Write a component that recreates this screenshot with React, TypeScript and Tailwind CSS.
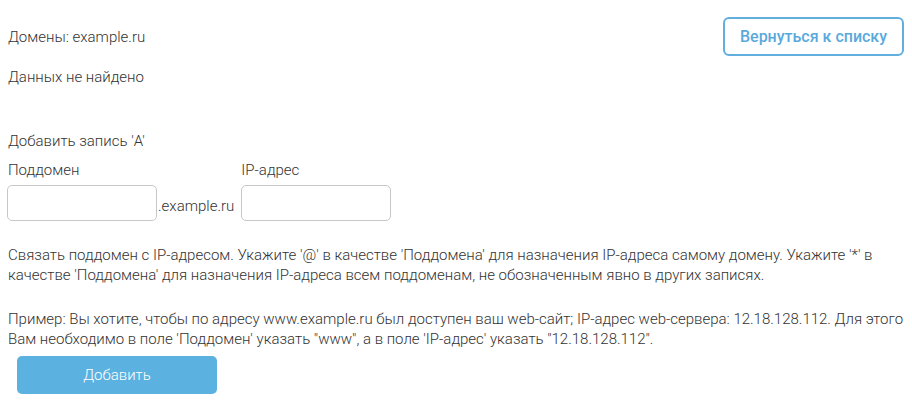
export default function App() {
  return (
    <div className="w-[912px] h-[400px] bg-white text-[#333] text-[15px] leading-[20px] font-light px-2 font-['Roboto',sans-serif] overflow-hidden">
      {/* Header */}
      <div className="flex items-center justify-between pt-[17px]">
        <div>Домены: example.ru</div>
        <button className="h-[39px] w-[181px] rounded-[6px] border-2 border-[#62afdf] text-[#5aa9dc] text-[16px] font-medium">
          Вернуться к списку
        </button>
      </div>

      <div className="mt-[11px]">Данных не найдено</div>

      {/* Form */}
      <div className="mt-[44px]">Добавить запись 'A'</div>
      <div className="flex items-end mt-[9px]">
        <div className="flex flex-col">
          <label className="mb-[5px]">Поддомен</label>
          <input
            type="text"
            className="w-[150px] h-[36px] rounded-[5px] border border-[#c8c8c8] -ml-px"
          />
        </div>
        <span className="ml-px mb-[5px]">.example.ru</span>
        <div className="flex flex-col ml-[7px]">
          <label className="mb-[5px]">IP-адрес</label>
          <input
            type="text"
            className="w-[150px] h-[36px] rounded-[5px] border border-[#c8c8c8]"
          />
        </div>
      </div>

      <p className="mt-[24px]">
        Связать поддомен с IP-адресом. Укажите '@' в качестве 'Поддомена' для назначения IP-адреса самому домену. Укажите '*' в качестве 'Поддомена' для назначения IP-адреса всем поддоменам, не обозначенным явно в других записях.
      </p>
      <p className="mt-[24px]">
        Пример: Вы хотите, чтобы по адресу www.example.ru был доступен ваш web-сайт; IP-адрес web-сервера: 12.18.128.112. Для этого Вам необходимо в поле 'Поддомен' указать "www", а в поле 'IP-адрес' указать "12.18.128.112".
      </p>
      <button className="mt-[7px] ml-[9px] w-[200px] h-[38px] rounded-[5px] bg-[#5bb1e0] text-white text-[15px]">
        Добавить
      </button>
    </div>
  );
}
